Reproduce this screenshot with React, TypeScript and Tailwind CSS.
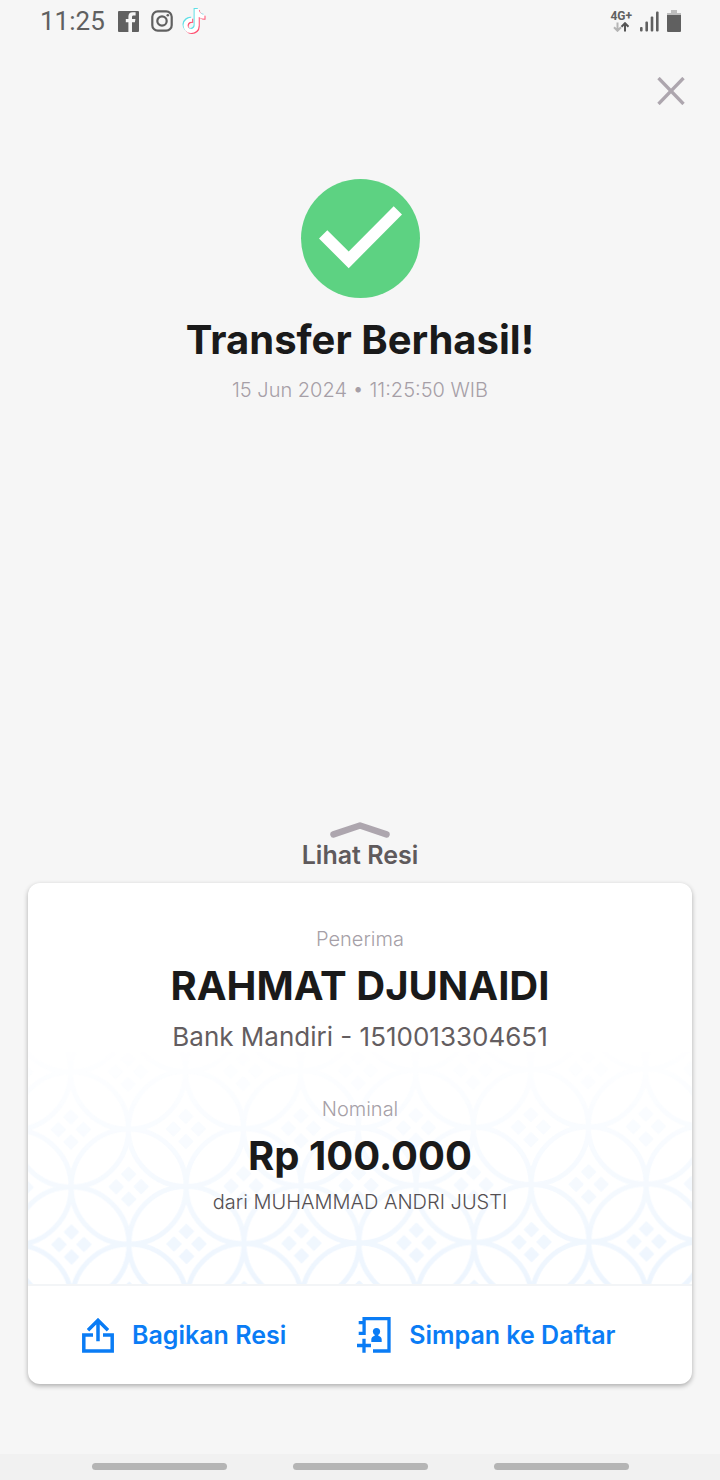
import React from "react";
import { FaTiktok } from "react-icons/fa6";

function StatusBar() {
  return (
    <header className="flex h-11 items-center justify-between pr-[39px] pb-0.5 pl-10 text-[#606060]">
      <div className="flex items-center">
        <time className="font-[Roboto,sans-serif] text-[26px] leading-8">11:25</time>
        <svg className="ml-[13px] size-[21px]" viewBox="0 0 21 21" aria-hidden="true">
          <rect width="21" height="21" rx="1" fill="#606060" />
          <path d="M17.6 4.4h-1.900c-1.300 0-1.700.6-1.700 1.600v2h3.400l-.5 3.300H14V21h-3.600v-9.700H7.800V8h2.600V5.400C10.400 2.700 12 1.200 14.600 1.200h3z" fill="#f6f6f6" />
        </svg>
        <svg className="ml-3 size-[22px]" viewBox="0 0 22 22" fill="none" stroke="#606060" strokeWidth="2.200" aria-hidden="true">
          <rect x="1.300" y="1.300" width="19.400" height="19.400" rx="5.500" />
          <circle cx="11" cy="11" r="4.700" />
          <circle cx="16.800" cy="5.200" r="1.300" fill="#606060" stroke="none" />
        </svg>
        <span className="relative ml-2 block size-[26px]" aria-hidden="true">
          <FaTiktok className="absolute top-0 left-0 size-6 text-[#5fdfe6]" />
          <FaTiktok className="absolute top-0.5 left-0.5 size-6 text-[#ff4f70]" />
          <FaTiktok className="absolute top-px left-px size-6 text-white" />
        </span>
      </div>
      <div className="flex items-center gap-2">
        <div className="flex flex-col items-center">
          <span className="font-[Roboto,sans-serif] text-[12px] leading-3 font-bold">4G+</span>
          <svg className="h-[10px] w-4" viewBox="0 0 16 10" fill="none" strokeWidth="2" aria-hidden="true">
            <path d="M4.500 0.500v8M1 5.300l3.500 3.500L8 5.300" stroke="#b5b5b5" />
            <path d="M12 9.500v-8M8.500 4.700L12 1.200l3.500 3.500" stroke="#555" />
          </svg>
        </div>
        <svg className="h-[21px] w-[19px]" viewBox="0 0 19 21" fill="#606060" aria-hidden="true">
          <rect x="0" y="16" width="2.600" height="4.500" rx="1" />
          <rect x="5.400" y="10.500" width="2.600" height="10" rx="1" />
          <rect x="10.700" y="5.500" width="2.600" height="15" rx="1" />
          <rect x="16" y="0.500" width="2.600" height="20" rx="1" />
        </svg>
        <svg className="h-[22px] w-[14px]" viewBox="0 0 14 22" aria-hidden="true">
          <path d="M4 0h6v3h4v3H0V3h4z" fill="#bdbdbd" />
          <path d="M0 5h14v16a1 1 0 0 1-1 1H1a1 1 0 0 1-1-1z" fill="#606060" />
        </svg>
      </div>
    </header>
  );
}

function KawungPattern() {
  return (
    <svg className="absolute inset-x-0 bottom-0 h-[232px] w-full" aria-hidden="true">
      <defs>
        <linearGradient id="fade" x1="0" y1="0" x2="0" y2="1">
          <stop offset="0" stopColor="#fff" stopOpacity="0.050" />
          <stop offset="0.450" stopColor="#fff" stopOpacity="0.450" />
          <stop offset="1" stopColor="#fff" />
        </linearGradient>
        <mask id="fade-mask">
          <rect width="100%" height="232" fill="url(#fade)" />
        </mask>
        <g id="seed" fill="#edf5fe">
          <circle r="57.500" fill="none" stroke="#edf5fe" strokeWidth="5" />
          <g strokeLinejoin="round" strokeWidth="2" stroke="#edf5fe">
            <path d="M0-19l6.500 6.500L0-6l-6.500-6.500zM0 19l6.500-6.500L0 6l-6.500 6.500zM-19 0l6.500-6.500L-6 0l-6.500 6.500zM19 0l-6.500-6.500L6 0l6.500 6.500z" />
          </g>
        </g>
        <pattern id="kawung" width="115" height="115" patternUnits="userSpaceOnUse" patternTransform="translate(43.500 192.500) rotate(-0.300)">
          <use href="#seed" />
          <use href="#seed" x="115" />
          <use href="#seed" y="115" />
          <use href="#seed" x="115" y="115" />
          <use href="#seed" x="57.500" y="57.500" />
        </pattern>
      </defs>
      <rect width="100%" height="232" fill="url(#kawung)" mask="url(#fade-mask)" />
    </svg>
  );
}

export default function App() {
  return (
    <div className="flex min-h-screen flex-col bg-[#f6f6f6] font-[Inter,sans-serif]">
      <StatusBar />
      <main className="flex grow flex-col px-7">
        <button type="button" aria-label="Tutup" className="mt-[23px] mr-[-3px] self-end p-2.5">
          <svg className="size-7" viewBox="0 0 28 28" stroke="#ada6ae" strokeWidth="3.300" aria-hidden="true">
            <path d="M1.500 1l25 26M26.500 1l-25 26" />
          </svg>
        </button>

        <section className="mt-16 flex flex-col items-center text-center">
          <svg className="size-[119px]" viewBox="0 0 119 119" aria-hidden="true">
            <circle cx="59.500" cy="59.500" r="59.500" fill="#5dd282" />
            <path d="M18 59.500l8.300-8.300 21.400 21.300L92.700 27.200l8.300 8.300-53.300 53.700z" fill="#fff" />
          </svg>
          <h1 className="mt-4 text-[40px] leading-[52px] font-bold text-[#1a1a1a]">Transfer Berhasil!</h1>
          <p className="mt-2.5 text-[20px] leading-7 font-light text-[#a69fa7]">15 Jun 2024 • 11:25:50 WIB</p>
        </section>

        <button type="button" className="mt-auto flex flex-col items-center gap-px self-center text-[25px] leading-8 font-semibold text-[#5f5a5c]">
          <svg className="h-4 w-[60px]" viewBox="0 0 60 16" fill="none" stroke="#ada6ae" strokeWidth="6.500" strokeLinecap="round" strokeLinejoin="round" aria-hidden="true">
            <path d="M3.500 12.400L30 3.500l26.500 8.900" />
          </svg>
          Lihat Resi
        </button>

        <article className="mt-3 mb-[70px] overflow-hidden rounded-xl bg-white shadow-[0_2px_5px_rgba(0,0,0,0.3)]">
          <div className="relative">
            <KawungPattern />
            <div className="relative flex flex-col items-center pt-[42px] pb-[68px] text-center">
              <p className="text-[20px] leading-7 font-light text-[#a69fa7]">Penerima</p>
              <h2 className="mt-[7px] text-[40px] leading-[52px] font-bold text-[#1a1a1a]">RAHMAT DJUNAIDI</h2>
              <p className="mt-[7px] text-[26px] leading-9 font-normal text-[#635d60]">Bank Mandiri - 1510013304651</p>
              <p className="mt-10 text-[20px] leading-7 font-light text-[#a69fa7]">Nominal</p>
              <p className="mt-[7px] text-[40px] leading-[52px] font-bold text-[#1a1a1a]">Rp 100.000</p>
              <p className="mt-1.5 text-[20px] leading-7 font-light text-[#554f52]">dari MUHAMMAD ANDRI JUSTI</p>
            </div>
          </div>
          <div className="flex h-[100px] items-center border-t-2 border-[#f3f5f7] pl-[54px] text-[25px] leading-8 font-semibold text-[#0a7cf5]">
            <button type="button" className="flex items-center gap-[18px]">
              <svg className="h-[35px] w-8" viewBox="0 0 32 35" fill="none" stroke="currentColor" strokeWidth="3.500" aria-hidden="true">
                <path d="M11 17H1.800v16h28.400V17H21M16 23.300V3M6 12.300l10-10 10 10" />
              </svg>
              Bagikan Resi
            </button>
            <button type="button" className="ml-[71px] flex items-center gap-[18px]">
              <svg className="h-9 w-[34px]" viewBox="0 0 34 36" fill="none" stroke="currentColor" strokeWidth="3.300" aria-hidden="true">
                <path d="M1.700 16.400h5.400V1.700h24.900v32.300H16M1.700 5.700h5.400M0 28.500h14M7 21.700v14" />
                <circle cx="19.500" cy="14.500" r="3.600" fill="currentColor" stroke="none" />
                <path d="M14.300 25v-2.600c0-2 1.800-3.200 3.400-3.600V17h3.600v1.800c1.600.4 3.400 1.600 3.400 3.600V25z" fill="currentColor" stroke="none" />
              </svg>
              Simpan ke Daftar
            </button>
          </div>
        </article>
      </main>
      <nav aria-label="Navigasi sistem" className="flex h-[26px] items-center justify-center gap-[66px] bg-[#f1f1f1] pb-px">
        <button type="button" aria-label="Terbaru" className="h-[7px] w-[135px] rounded-full bg-[#b5b5b5]" />
        <button type="button" aria-label="Beranda" className="h-[7px] w-[135px] rounded-full bg-[#b5b5b5]" />
        <button type="button" aria-label="Kembali" className="h-[7px] w-[135px] rounded-full bg-[#b5b5b5]" />
      </nav>
    </div>
  );
}
